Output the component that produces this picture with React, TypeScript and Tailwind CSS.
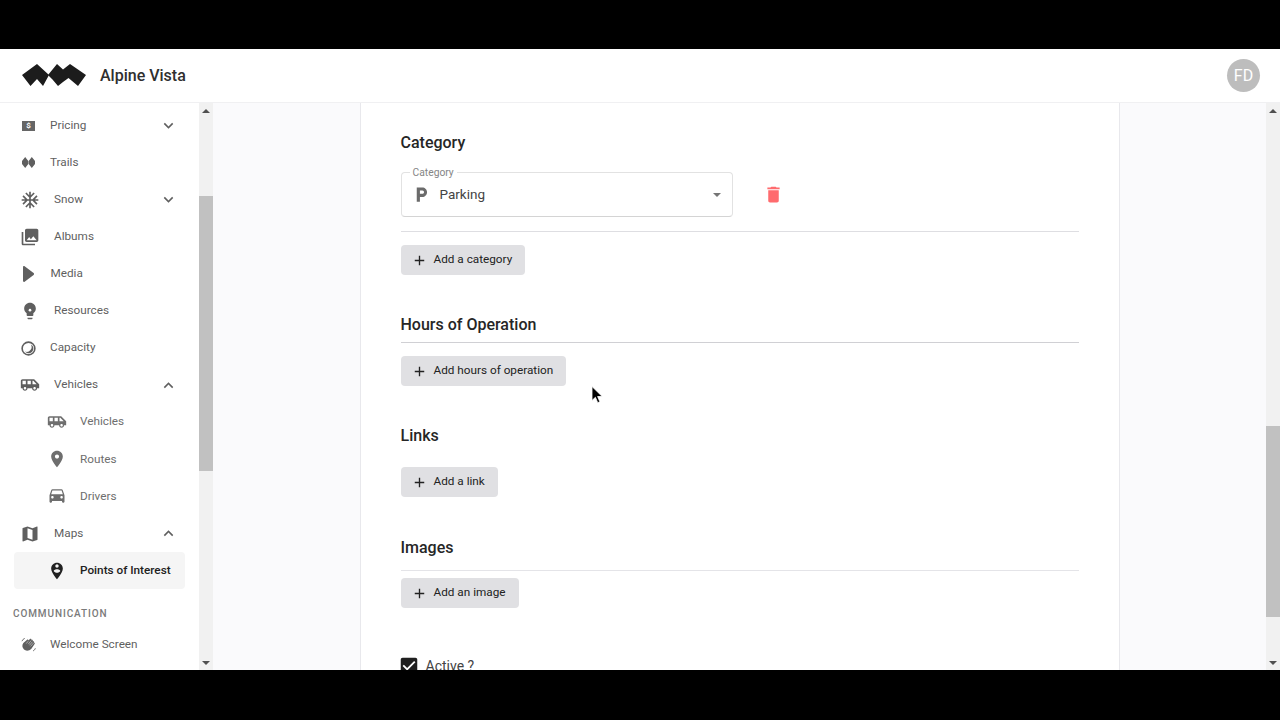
import { ReactNode } from 'react'

const FONT = "font-['Roboto',_'Liberation_Sans',_sans-serif]"

const Icon = ({ d, className }: { d: string; className: string }) => (
    <svg viewBox="0 0 24 24" fill="currentColor" className={className}>
        <path d={d} />
    </svg>
)

const PATHS = {
    snow: 'M22 11h-4.17l3.24-3.24-1.41-1.42L15 11h-2V9l4.66-4.66-1.42-1.41L13 6.17V2h-2v4.17L7.76 2.93 6.34 4.34 11 9v2H9L4.34 6.34 2.93 7.76 6.17 11H2v2h4.17l-3.24 3.24 1.41 1.42L9 13h2v2l-4.66 4.66 1.42 1.41L11 17.83V22h2v-4.17l3.24 3.24 1.42-1.41L13 15v-2h2l4.66 4.66 1.41-1.42L17.83 13H22z',
    albums: 'M22 16V4c0-1.1-.9-2-2-2H8c-1.1 0-2 .9-2 2v12c0 1.1.9 2 2 2h12c1.1 0 2-.9 2-2zm-11-4l2.03 2.71L16 11l4 5H8l3-4zM2 6v14c0 1.1.9 2 2 2h14v-2H4V6H2z',
    bulb: 'M9 21c0 .55.45 1 1 1h4c.55 0 1-.45 1-1v-1H9v1zm3-19C8.14 2 5 5.14 5 9c0 2.38 1.19 4.47 3 5.74V17c0 .55.45 1 1 1h6c.55 0 1-.45 1-1v-2.26c1.81-1.27 3-3.36 3-5.74 0-3.86-3.14-7-7-7z',
    shuttle: 'M17 5H3c-1.1 0-2 .89-2 2v9h2c0 1.65 1.34 3 3 3s3-1.35 3-3h5.5c0 1.65 1.34 3 3 3s3-1.35 3-3H23v-5l-6-6zM3 11V7h4v4H3zm3 6.5c-.83 0-1.5-.67-1.5-1.5s.67-1.5 1.5-1.5 1.5.67 1.5 1.5-.67 1.5-1.5 1.5zm7-6.5H9V7h4v4zm4.5 6.5c-.83 0-1.5-.67-1.5-1.5s.67-1.5 1.5-1.5 1.5.67 1.5 1.5-.67 1.5-1.5 1.5zM15 11V7h1l4 4h-5z',
    room: 'M12 2C8.13 2 5 5.13 5 9c0 5.25 7 13 7 13s7-7.75 7-13c0-3.87-3.13-7-7-7zm0 9.5c-1.38 0-2.5-1.12-2.5-2.5s1.12-2.5 2.5-2.5 2.5 1.12 2.5 2.5-1.12 2.5-2.5 2.5z',
    car: 'M18.92 5.01C18.72 4.42 18.16 4 17.5 4h-11c-.66 0-1.21.42-1.42 1.01L3 11v8c0 .55.45 1 1 1h1c.55 0 1-.45 1-1v-1h12v1c0 .55.45 1 1 1h1c.55 0 1-.45 1-1v-8l-2.08-5.99zM6.5 15c-.83 0-1.5-.67-1.5-1.5S5.67 12 6.5 12s1.5.67 1.5 1.5S7.33 15 6.5 15zm11 0c-.83 0-1.5-.67-1.5-1.5s.67-1.5 1.5-1.5 1.5.67 1.5 1.5-.67 1.5-1.5 1.5zM5 10l1.5-4.5h11L19 10H5z',
    map: 'M20.5 3l-.16.03L15 5.1 9 3 3.36 4.9c-.21.07-.36.25-.36.48V20.5c0 .28.22.5.5.5l.16-.03L9 18.9l6 2.1 5.64-1.9c.21-.07.36-.25.36-.48V3.5c0-.28-.22-.5-.5-.5zM15 19l-6-2.11V5l6 2.11V19z',
    poi: 'M12 2C8.14 2 5 5.14 5 9c0 5.25 7 13 7 13s7-7.75 7-13c0-3.86-3.14-7-7-7zm0 2c1.1 0 2 .9 2 2 0 1.11-.9 2-2 2s-2-.89-2-2c0-1.1.9-2 2-2zm0 10c-1.67 0-3.14-.85-4-2.15.02-1.32 2.67-2.05 4-2.05s3.98.73 4 2.05c-.86 1.3-2.33 2.15-4 2.15z',
    down: 'M16.59 8.59 12 13.17 7.41 8.59 6 10l6 6 6-6z',
    up: 'M12 8l-6 6 1.41 1.41L12 10.83l4.59 4.58L18 14z',
    add: 'M19 13h-6v6h-2v-6H5v-2h6V5h2v6h6v2z',
    trash: 'M6 19c0 1.1.9 2 2 2h8c1.1 0 2-.9 2-2V7H6v12zM19 4h-3.5l-1-1h-5l-1 1H5v2h14V4z',
    parking: 'M13 3H6v18h4v-6h3c3.31 0 6-2.69 6-6s-2.69-6-6-6zm.2 8H10V7h3.2c1.1 0 2 .9 2 2s-.9 2-2 2z',
    check: 'M19 3H5c-1.11 0-2 .9-2 2v14c0 1.1.89 2 2 2h14c1.11 0 2-.9 2-2V5c0-1.1-.89-2-2-2zm-9 14l-5-5 1.41-1.41L10 14.17l7.59-7.59L19 8l-9 9z',
}

const PriceIcon = () => (
    <div className="w-[13px] h-[10px] bg-[#666] flex items-center justify-center text-white text-[8px] font-bold leading-none">$</div>
)

const TrailsIcon = () => (
    <svg viewBox="0 0 13 11" fill="currentColor" className="w-[13px] h-[11px]">
        <path d="M3.200 0 6.300 4V7L3.200 11 0 7V4zM9.800 0 13 4V7L9.800 11 6.700 7V4z" />
    </svg>
)

const BulbIcon = () => (
    <svg viewBox="0 0 24 24" fill="currentColor" className="w-[20px] h-[20px]">
        <path d={PATHS.bulb} />
        <circle cx="12" cy="11" r="1.600" fill="#fff" />
    </svg>
)

const PlayIcon = () => (
    <svg viewBox="0 0 11 16" fill="currentColor" className="w-[11px] h-[16px]">
        <path d="M0 1.200C0 .2.8-.2 1.600.3L10.600 7c.6.5.6 1.500 0 2L1.600 15.700C.8 16.200 0 15.800 0 14.800z" />
    </svg>
)

const GaugeIcon = () => (
    <svg viewBox="0 0 16 16" className="w-[15px] h-[15px]">
        <circle cx="8" cy="8" r="6.800" fill="none" stroke="currentColor" strokeWidth="1.700" />
        <path d="M10.500 3.600A5 5 0 0 1 8 13 5 5 0 0 1 4.200 11.200 5.200 5.200 0 0 0 10.500 3.600z" fill="currentColor" />
    </svg>
)

const WaveIcon = () => (
    <svg viewBox="0 0 16 16" fill="none" className="w-[15px] h-[15px]">
        <path d="M2.500 6.500 6.500 3c.7-.6 1.500 0 1.200.8L9.600 2c.8-.7 2 .2 1.400 1.200 1-.7 2.100.3 1.400 1.300 1-.5 1.900.5 1.200 1.500.9-.3 1.500.7.900 1.500l-3.400 5C9 14.800 5.300 15.300 3.200 13.400 1 11.300 1 8.300 2.500 6.500z" fill="currentColor" />
        <path d="M7.600 4.500 5.600 7M10.800 3.800 7.800 7.600M12.200 5.100 9 8.800M13.400 6.400 10.200 10" stroke="#fff" strokeWidth="0.500" />
        <path d="M1 4.500C1.500 3 2.500 2 4 1.500M15.300 12c-.3 1.300-1.200 2.300-2.500 2.800" stroke="currentColor" strokeWidth="0.900" />
    </svg>
)

type NavItem = {
    label: string
    icon: ReactNode
    pad: string
    text: string
    chevron?: 'up' | 'down'
    sub?: boolean
    active?: boolean
}

const ROOT_ICON = 'w-[20px] h-[20px]'

const NAV: NavItem[] = [
    { label: 'Pricing', icon: <PriceIcon />, pad: 'pl-[8px]', text: 'ml-[15px]', chevron: 'down' },
    { label: 'Trails', icon: <TrailsIcon />, pad: 'pl-[8px]', text: 'ml-[15px]' },
    { label: 'Snow', icon: <Icon d={PATHS.snow} className={ROOT_ICON} />, pad: 'pl-[6px]', text: 'ml-[14px]', chevron: 'down' },
    { label: 'Albums', icon: <Icon d={PATHS.albums} className={ROOT_ICON} />, pad: 'pl-[6px]', text: 'ml-[14px]' },
    { label: 'Media', icon: <PlayIcon />, pad: 'pl-[9px]', text: 'ml-[16.500px]' },
    { label: 'Resources', icon: <BulbIcon />, pad: 'pl-[6px]', text: 'ml-[14px]' },
    { label: 'Capacity', icon: <GaugeIcon />, pad: 'pl-[7px]', text: 'ml-[14px]' },
    { label: 'Vehicles', icon: <Icon d={PATHS.shuttle} className={ROOT_ICON} />, pad: 'pl-[6px]', text: 'ml-[14px]', chevron: 'up' },
    { label: 'Vehicles', icon: <Icon d={PATHS.shuttle} className={ROOT_ICON} />, pad: 'pl-[33px]', text: 'ml-[13px]', sub: true },
    { label: 'Routes', icon: <Icon d={PATHS.room} className={ROOT_ICON} />, pad: 'pl-[33px]', text: 'ml-[13px]', sub: true },
    { label: 'Drivers', icon: <Icon d={PATHS.car} className={ROOT_ICON} />, pad: 'pl-[33px]', text: 'ml-[13px]', sub: true },
    { label: 'Maps', icon: <Icon d={PATHS.map} className={ROOT_ICON} />, pad: 'pl-[6px]', text: 'ml-[14px]', chevron: 'up' },
    { label: 'Points of Interest', icon: <Icon d={PATHS.poi} className={ROOT_ICON} />, pad: 'pl-[33px]', text: 'ml-[13px]', sub: true, active: true },
]

const NavRow = ({ item }: { item: NavItem }) => (
    <div
        className={`h-[37.100px] flex items-center rounded text-[11.750px] ${item.pad} ${
            item.active ? 'bg-[#f5f5f5] text-[#212121] font-medium' : item.sub ? 'text-[#6e6e6e]' : 'text-[#5f5f5f]'
        }`}
    >
        <div className="flex items-center justify-center">{item.icon}</div>
        <span className={item.text}>{item.label}</span>
        {item.chevron && <Icon d={item.chevron === 'up' ? PATHS.up : PATHS.down} className="ml-auto mr-[7px] w-[19px] h-[19px]" />}
    </div>
)

const ScrollTrack = ({ thumb }: { thumb: string }) => (
    <div className="shrink-0 w-[14px] h-full bg-[#f1f1f1] flex flex-col">
        <div className="h-[10px] flex items-end justify-center">
            <div className="w-0 h-0 border-x-[4px] border-x-transparent border-b-[4px] border-b-[#505050]" />
        </div>
        <div className={`bg-[#c1c1c1] ${thumb}`} />
        <div className="mt-auto mb-[5px] flex justify-center">
            <div className="w-0 h-0 border-x-[4px] border-x-transparent border-t-[4px] border-t-[#505050]" />
        </div>
    </div>
)

const Sidebar = () => (
    <div className="w-[213px] shrink-0 flex h-full bg-white">
        <div className="w-[199px] h-full px-[14px] pt-[4px] overflow-hidden">
            {NAV.map((item, i) => (
                <NavRow key={i} item={item} />
            ))}
            <div className="h-[37px] -ml-px flex items-end pb-[5px] text-[10px] font-medium tracking-[0.9px] text-[#7a7a7a]">COMMUNICATION</div>
            <div className="h-[37px] pl-[7px] flex items-center text-[11.750px] text-[#5f5f5f]">
                <WaveIcon />
                <span className="ml-[14px]">Welcome Screen</span>
            </div>
        </div>
        <ScrollTrack thumb="mt-[83px] h-[275px]" />
    </div>
)

const AddButton = ({ label, className }: { label: string; className: string }) => (
    <button className={`h-[30px] w-fit pl-[12px] pr-[13px] flex items-center rounded bg-[#e0e0e3] text-[11.750px] text-[#222] ${className}`}>
        <Icon d={PATHS.add} className="w-[13px] h-[13px] mr-[8px] scale-125" />
        {label}
    </button>
)

const Heading = ({ children, className }: { children: ReactNode; className: string }) => (
    <div className={`h-6 leading-6 text-[16px] font-medium text-[#262626] ${className}`}>{children}</div>
)

const CategoryField = () => (
    <div className="mt-[17px] flex items-center">
        <div className="relative w-[332px] h-[45px] border border-[#e2e2e2] border-b-[#d4d4d4] rounded flex items-center pl-[10px] pr-[11px]">
            <span className="absolute -top-[7px] left-[8px] px-[3px] bg-white text-[10.300px] leading-[13px] text-[#858585]">Category</span>
            <Icon d={PATHS.parking} className="w-[19px] h-[19px] text-[#6b6b6b]" />
            <span className="ml-[9px] text-[13.500px] text-[#444]">Parking</span>
            <div className="ml-auto w-0 h-0 border-x-[4px] border-x-transparent border-t-[4px] border-t-[#757575]" />
        </div>
        <Icon d={PATHS.trash} className="ml-[30px] w-[21px] h-[21px] text-[#ff6b6e]" />
    </div>
)

const Cursor = () => (
    <svg viewBox="0 0 12 18" className="absolute left-[378px] top-[283px] w-[12px] h-[18px]">
        <path d="M1 0.500v14l3.400-3.200 2.300 5.400 2.200-.9-2.300-5.300h4.600z" fill="#000" stroke="#fff" strokeWidth="0.800" />
    </svg>
)

const Content = () => (
    <div className="relative flex-1 min-w-0 h-full bg-[#fafafc] flex justify-center">
        <div className="w-[760px] h-full bg-white border-x border-[#e8e8ec] px-[40px] pt-[28px] overflow-hidden">
            <Heading className="">Category</Heading>
            <CategoryField />
            <div className="mt-[14px] h-px bg-[#dedee2]" />
            <AddButton label="Add a category" className="mt-[13px]" />

            <Heading className="mt-[38px]">Hours of Operation</Heading>
            <div className="mt-[5px] h-px bg-[#d0d0d4]" />
            <AddButton label="Add hours of operation" className="mt-[13px]" />

            <Heading className="mt-[38px]">Links</Heading>
            <AddButton label="Add a link" className="mt-[19px]" />

            <Heading className="mt-[39px]">Images</Heading>
            <div className="mt-[10px] h-px bg-[#e4e4e8]" />
            <AddButton label="Add an image" className="mt-[7px]" />

            <div className="mt-[47px] -ml-[3px] flex items-center">
                <Icon d={PATHS.check} className="w-[22px] h-[22px] text-[#1f1f1f]" />
                <span className="ml-[6px] text-[14px] text-[#444]">Active ?</span>
            </div>
        </div>
        <Cursor />
    </div>
)

export default function App() {
    return (
        <div className={`w-[1280px] h-[720px] bg-black flex flex-col overflow-hidden ${FONT}`}>
            <div className="h-[49px] shrink-0" />
            <header className="h-[54px] shrink-0 bg-white border-b border-[#f0f0f2] flex items-center pl-[22px] pr-[20px]">
                <svg viewBox="0 0 64 23" className="w-[64px] h-[23px] text-[#1c1c1c]" fill="currentColor">
                    <path d="M0 11 15 0 27 11 21 22 15 15 8.500 22z" />
                    <path d="M26 11 35 0 41 5.500 48 0 64 11 56 22 46.500 14 41 18 36 22 30.500 15.500z" />
                </svg>
                <span className="ml-[14px] mt-[1px] text-[16px] font-medium text-[#2f2f2f]">Alpine Vista</span>
                <div className="ml-auto w-[33px] h-[33px] rounded-full bg-[#bdbdbd] flex items-center justify-center text-white text-[16px]">FD</div>
            </header>
            <div className="h-[567px] shrink-0 flex overflow-hidden">
                <Sidebar />
                <Content />
                <ScrollTrack thumb="mt-[313px] h-[191px]" />
            </div>
        </div>
    )
}
